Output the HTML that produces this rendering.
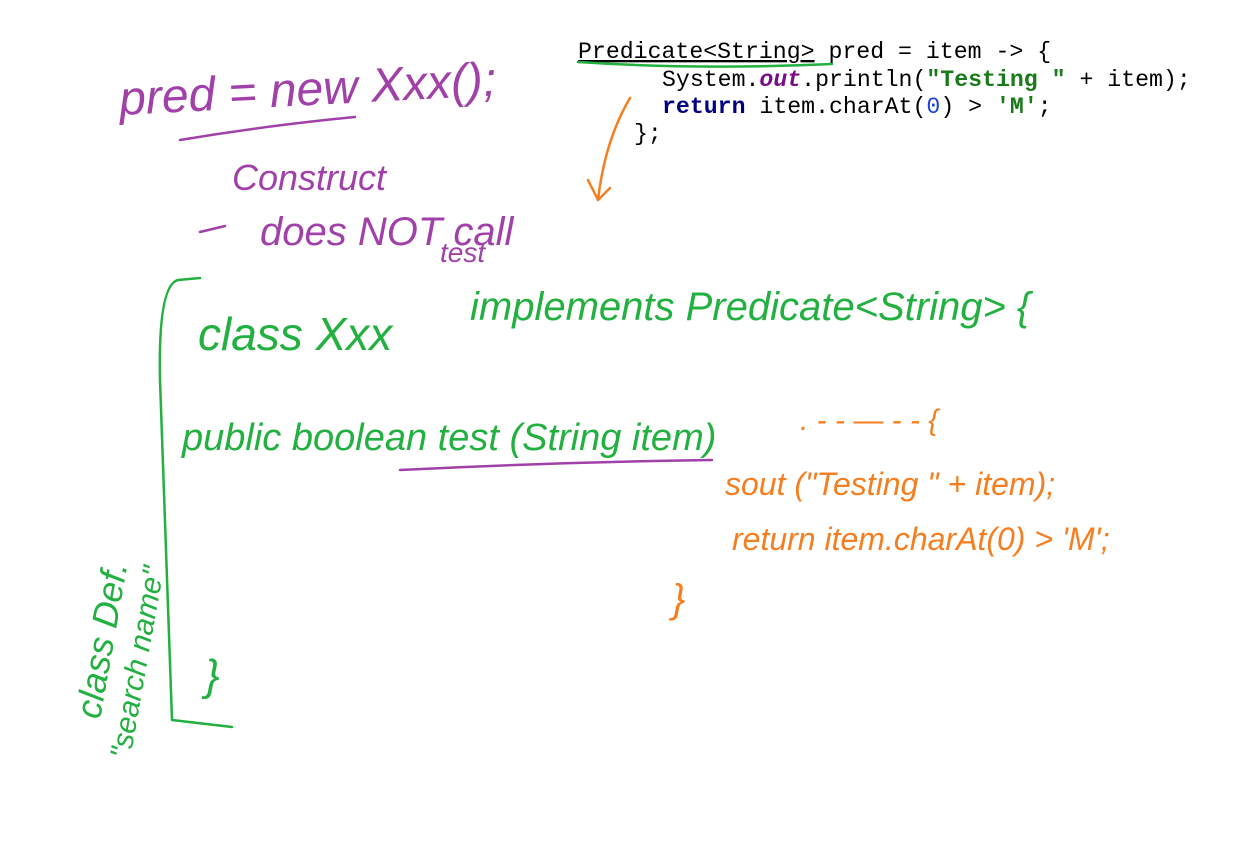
<!DOCTYPE html>
<html><head><meta charset="utf-8"><style>
html,body{margin:0;padding:0;background:#fff;}
svg{display:block}
.code{font-family:"Liberation Mono",monospace;font-size:23.2px;fill:#000}
</style></head><body>
<svg width="1254" height="841" viewBox="0 0 1254 841" xmlns="http://www.w3.org/2000/svg">
<rect width="1254" height="841" fill="#fff"/>
<g class="code" xml:space="preserve">
<text x="578" y="58"><tspan text-decoration="underline">Predicate&lt;String&gt;</tspan> pred = item -&gt; {</text>
<text x="662" y="86">System.<tspan fill="#7a0c86" font-weight="bold" font-style="italic">out</tspan>.println(<tspan fill="#1a7a1a" font-weight="bold">"Testing "</tspan> + item);</text>
<text x="662" y="113"><tspan fill="#000080" font-weight="bold">return</tspan> item.charAt(<tspan fill="#1a40e0">0</tspan>) &gt; <tspan fill="#1a7a1a" font-weight="bold">'M'</tspan>;</text>
<text x="634" y="140">};</text>
</g>
<g fill="none" stroke-linecap="round" stroke-linejoin="round">
<path d="M578 62 Q700 70 832 64" stroke="#22b040" stroke-width="2.5"/>
<path d="M180 140 Q270 125 355 117" stroke="#a040a8" stroke-width="2.5"/>
<path d="M200 232 L225 226" stroke="#a040a8" stroke-width="2.5"/>
<path d="M200 278 L178 280 Q158 285 160 380 L172 720 L232 727" stroke="#22b040" stroke-width="2.5"/>
<path d="M400 470 Q560 462 712 460" stroke="#a040a8" stroke-width="2.5"/>
<path d="M630 98 Q605 140 598 200 M588 180 L598 200 L610 188" stroke="#f57f20" stroke-width="2.5"/>
</g>
<g font-family="Liberation Sans, sans-serif" font-style="italic" font-size="40">
<text x="120" y="115" fill="#a040a8" font-size="48" transform="rotate(-3 120 115)">pred = new Xxx();</text>
<text x="232" y="190" fill="#a040a8" font-size="36">Construct</text>
<text x="260" y="245" fill="#a040a8" font-size="40">does NOT call</text>
<text x="440" y="262" fill="#a040a8" font-size="28">test</text>
<text x="198" y="350" fill="#22b040" font-size="46">class Xxx</text>
<text x="470" y="320" fill="#22b040" font-size="40">implements Predicate&lt;String&gt; {</text>
<text x="182" y="450" fill="#22b040" font-size="38">public boolean test (String item)</text>
<text x="205" y="690" fill="#22b040" font-size="44">}</text>
<text x="100" y="720" fill="#22b040" font-size="36" transform="rotate(-80 100 720)">class Def.</text>
<text x="130" y="760" fill="#22b040" font-size="30" transform="rotate(-80 130 760)">"search name"</text>
<text x="800" y="430" fill="#f57f20" font-size="30">. - - — - - {</text>
<text x="725" y="495" fill="#f57f20" font-size="32">sout ("Testing " + item);</text>
<text x="732" y="550" fill="#f57f20" font-size="32">return item.charAt(0) &gt; 'M';</text>
<text x="672" y="612" fill="#f57f20" font-size="40">}</text>
</g>
</svg>
</body></html>
